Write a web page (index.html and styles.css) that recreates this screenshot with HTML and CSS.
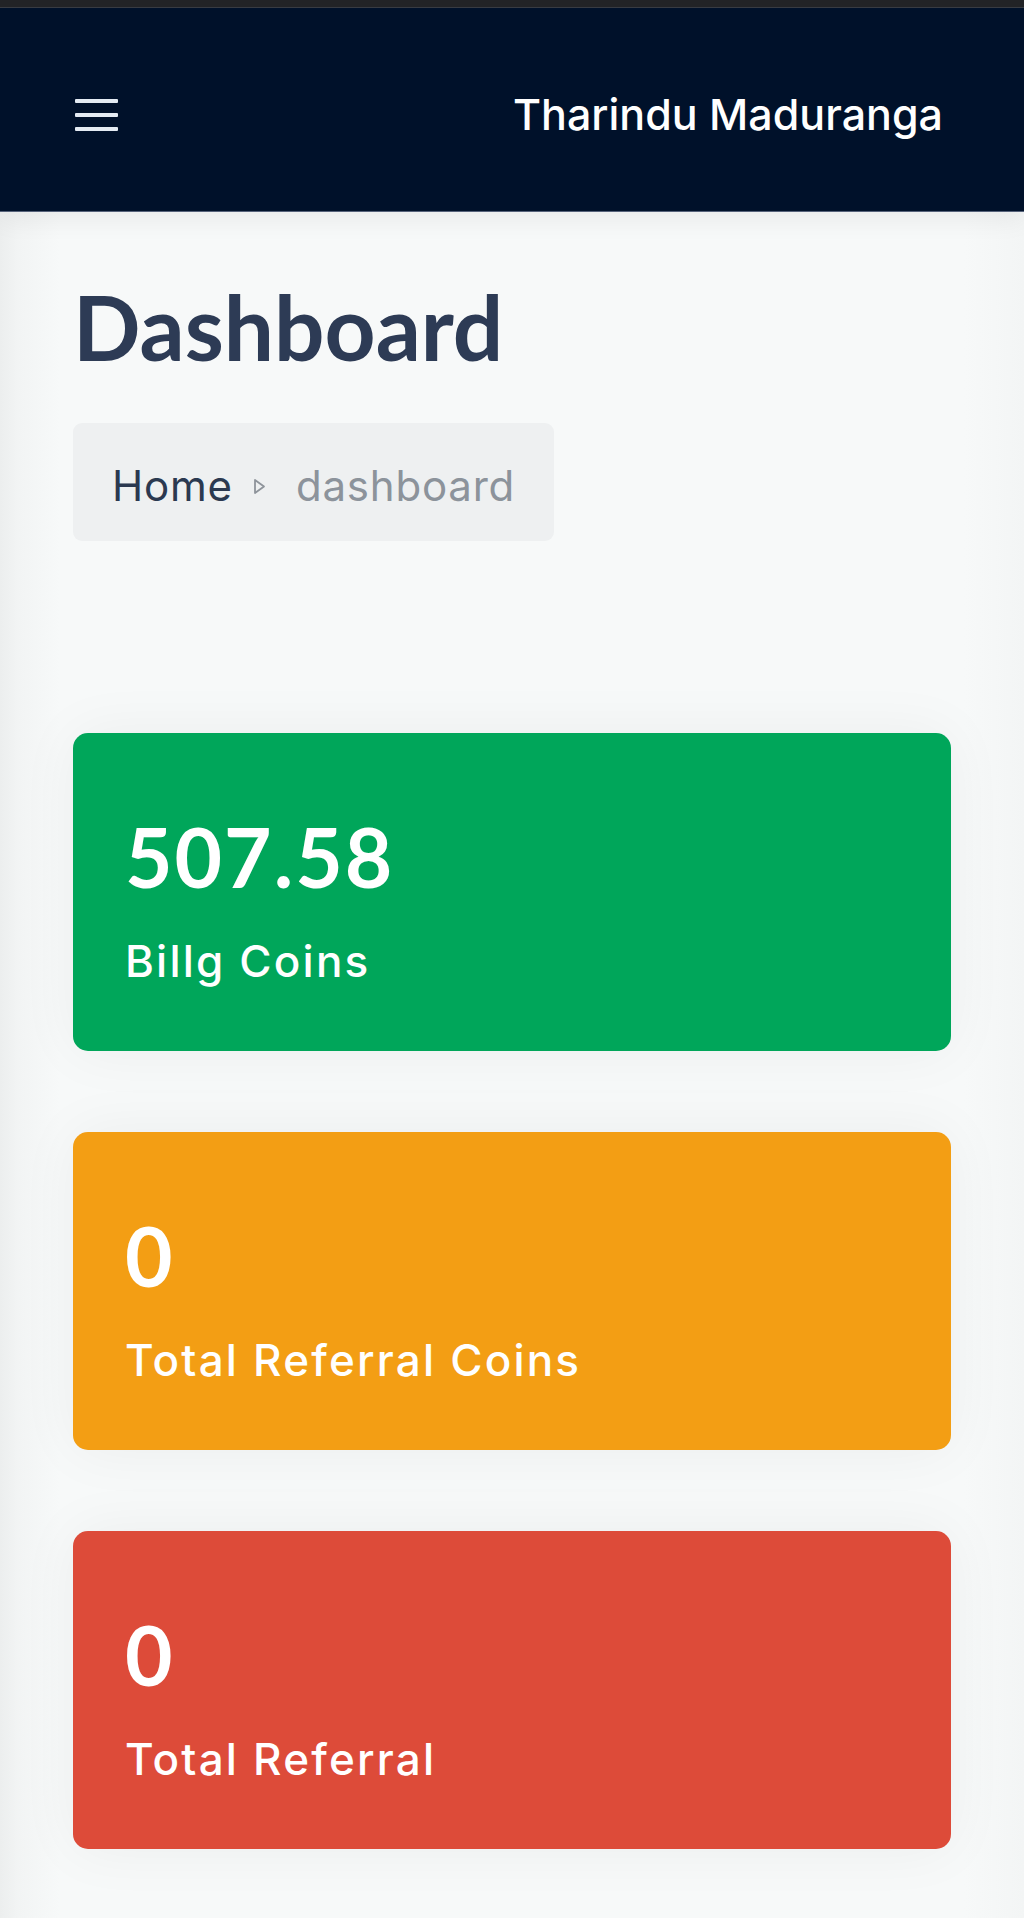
FILE: index.html
```html
<!DOCTYPE html>
<html lang="en">
<head>
<meta charset="utf-8">
<title>Dashboard</title>
<link rel="stylesheet" href="styles.css">
</head>
<body>
<div class="statusbar"></div>
<header class="navbar">
  <button class="menu-toggle" aria-label="Toggle navigation">
    <span></span><span></span><span></span>
  </button>
  <div class="user-name">Tharindu Maduranga</div>
</header>
<main class="content">
  <h1 class="page-title">Dashboard</h1>
  <nav class="breadcrumb">
    <span class="crumb">Home</span>
    <svg class="crumb-sep" width="13" height="17" viewBox="0 0 13 17"><path d="M2 2 L11 8.5 L2 15 Z" fill="none" stroke="#8e949b" stroke-width="1.8" stroke-linejoin="round"/></svg>
    <span class="crumb active">dashboard</span>
  </nav>
  <section class="boxes">
    <div class="small-box bg-green">
      <div class="value">507.58</div>
      <div class="label">Billg Coins</div>
    </div>
    <div class="small-box bg-yellow">
      <div class="value">0</div>
      <div class="label">Total Referral Coins</div>
    </div>
    <div class="small-box bg-red">
      <div class="value">0</div>
      <div class="label">Total Referral</div>
    </div>
  </section>
</main>
</body>
</html>
```
FILE: styles.css
```css
html, body {
  margin: 0;
  padding: 0;
}
body {
  background: linear-gradient(to right, #eceeee 0, #f2f4f4 18px, #f7f9f9 60px, #f7f9f9 calc(100% - 60px), #f3f5f5 100%);
  font-family: "Inter", "Liberation Sans", sans-serif;
}
.statusbar {
  height: 7px;
  background: #232427;
  border-bottom: 1px solid #3a3d44;
}
.navbar {
  box-sizing: border-box;
  height: 204px;
  background: #00112a;
  border-bottom: 1px solid #56627a;
  display: flex;
  align-items: center;
  justify-content: space-between;
  padding: 10px 81px 0 75px;
  box-shadow: 0 6px 26px rgba(0, 0, 0, 0.07);
  position: relative;
}
.menu-toggle {
  background: none;
  border: 0;
  padding: 0;
  width: 43px;
  display: flex;
  flex-direction: column;
  gap: 10px;
  cursor: pointer;
}
.menu-toggle span {
  display: block;
  height: 4px;
  border-radius: 1px;
  background: #e4ebf3;
}
.user-name {
  color: #ffffff;
  font-family: "Inter", "Liberation Sans", sans-serif;
  font-weight: 500;
  font-size: 43px;
  line-height: 1;
  letter-spacing: 0;
}
.content {
  padding: 0 73px 68px;
}
.page-title {
  margin: 70px 0 0;
  font-family: "Lato", "Liberation Sans", sans-serif;
  font-weight: 700;
  font-size: 89px;
  line-height: 1;
  color: #2d3b55;
  letter-spacing: 0;
}
.breadcrumb {
  box-sizing: border-box;
  margin-top: 52px;
  width: 481px;
  height: 118px;
  background: #eef0f1;
  border-radius: 9px;
  display: flex;
  align-items: center;
  padding: 8px 0 0 39px;
  font-size: 42px;
  line-height: 1;
  letter-spacing: 0.8px;
}
.crumb {
  color: #2b3950;
}
.crumb.active {
  color: #8c939b;
}
.crumb-sep {
  margin: 0 30px 0 20px;
}
.boxes {
  margin-top: 192px;
  display: flex;
  flex-direction: column;
  gap: 81px;
}
.small-box {
  box-sizing: border-box;
  height: 318px;
  border-radius: 15px;
  padding: 82px 52px 0;
  color: #ffffff;
  box-shadow: 0 0 60px rgba(0, 0, 0, 0.05);
}
.bg-green { background: #00a65a; }
.bg-yellow { background: #f39e14; }
.bg-red { background: #dd4b39; }
.value {
  font-family: "Lato", "Liberation Sans", sans-serif;
  font-weight: 700;
  font-size: 82px;
  line-height: 1;
  letter-spacing: 2px;
}
.label {
  margin-top: 42px;
  font-family: "Inter", "Liberation Sans", sans-serif;
  font-weight: 500;
  font-size: 44px;
  line-height: 1;
  letter-spacing: 2.2px;
}
```
